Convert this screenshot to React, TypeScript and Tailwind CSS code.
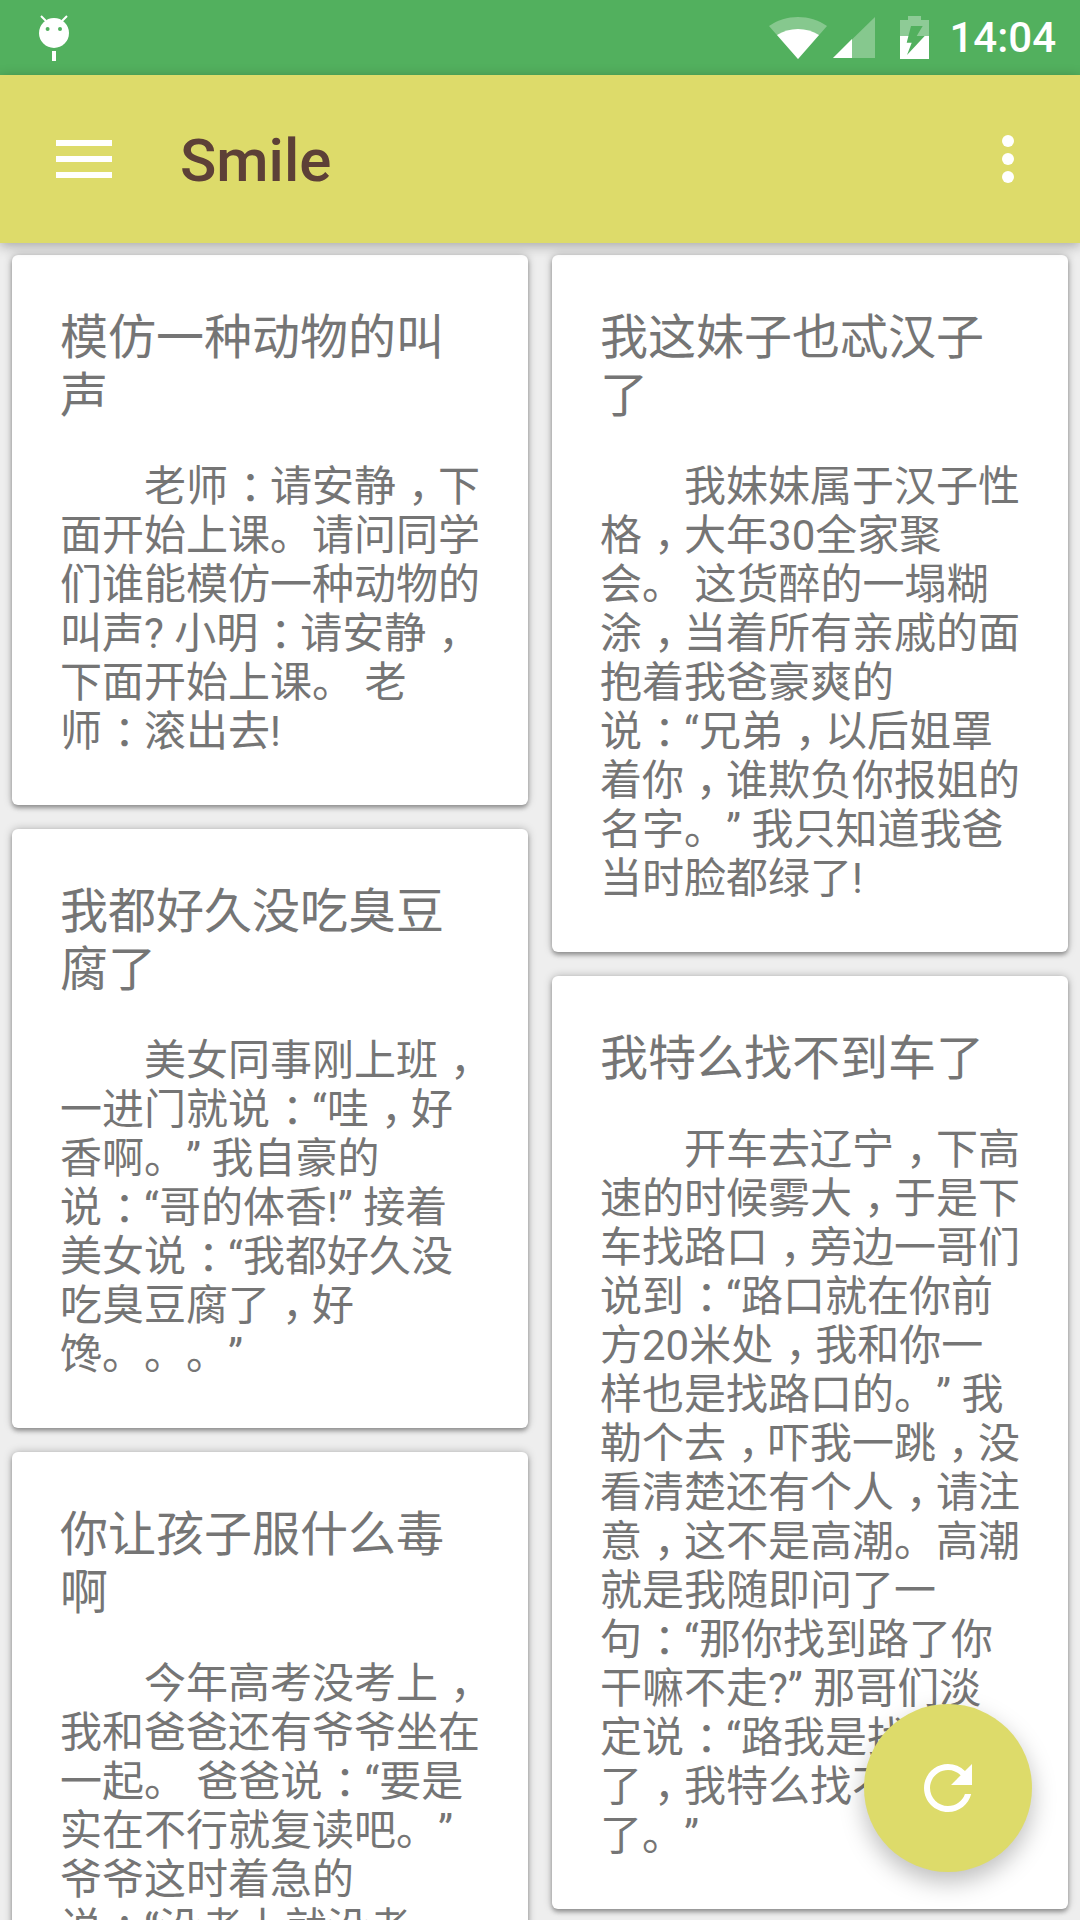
const font = { fontFamily: 'Roboto, "Noto Sans CJK SC", sans-serif' };

interface Joke {
  title: string[];
  body: string[];
}

const leftJokes: Joke[] = [
  {
    title: ['模仿一种动物的叫', '声'],
    body: ['老师：请安静，下', '面开始上课。请问同学', '们谁能模仿一种动物的', '叫声? 小明：请安静，', '下面开始上课。 老', '师：滚出去!'],
  },
  {
    title: ['我都好久没吃臭豆', '腐了'],
    body: ['美女同事刚上班，', '一进门就说：“哇，好', '香啊。” 我自豪的', '说：“哥的体香!” 接着', '美女说：“我都好久没', '吃臭豆腐了，好', '馋。。。”'],
  },
  {
    title: ['你让孩子服什么毒', '啊'],
    body: ['今年高考没考上，', '我和爸爸还有爷爷坐在', '一起。 爸爸说：“要是', '实在不行就复读吧。”', '爷爷这时着急的', '说：“没考上就没考'],
  },
];

const rightJokes: Joke[] = [
  {
    title: ['我这妹子也忒汉子', '了'],
    body: ['我妹妹属于汉子性', '格，大年30全家聚', '会。 这货醉的一塌糊', '涂，当着所有亲戚的面', '抱着我爸豪爽的', '说：“兄弟，以后姐罩', '着你，谁欺负你报姐的', '名字。” 我只知道我爸', '当时脸都绿了!'],
  },
  {
    title: ['我特么找不到车了'],
    body: ['开车去辽宁，下高', '速的时候雾大，于是下', '车找路口，旁边一哥们', '说到：“路口就在你前', '方20米处，我和你一', '样也是找路口的。” 我', '勒个去，吓我一跳，没', '看清楚还有个人，请注', '意，这不是高潮。高潮', '就是我随即问了一', '句：“那你找到路了你', '干嘛不走?” 那哥们淡', '定说：“路我是找到', '了，我特么找不到车', '了。”'],
  },
];

// the comma and colon sit in the middle of their cell in the screenshot
function BodyLine({ text }: { text: string }) {
  return (
    <>
      {text.split(/([，：])/).map((part, i) =>
        part === '，' || part === '：' ? (
          <span key={i} className="ml-[12px] tracking-[-12px]">
            {part}
          </span>
        ) : (
          <span key={i}>{part}</span>
        ),
      )}
    </>
  );
}

function JokeCard({ joke }: { joke: Joke }) {
  return (
    <div className="bg-white rounded-[6px] px-12 pt-[54px] pb-[49px] shadow-[0_3px_4px_rgba(0,0,0,0.3),0_0_8px_rgba(0,0,0,0.25)]">
      <div className="text-[48px] leading-[58px] text-[#757575] whitespace-nowrap">
        {joke.title.map((line) => (
          <div key={line}>{line}</div>
        ))}
      </div>
      <div className="mt-[37px] text-[42px] leading-[49px] text-[#757575] whitespace-nowrap [text-spacing-trim:space-all]">
        {joke.body.map((line, i) => (
          <div key={line} className={i === 0 ? 'pl-[84px]' : ''}>
            <BodyLine text={line} />
          </div>
        ))}
      </div>
    </div>
  );
}

export default function App() {
  return (
    <div className="relative w-[1080px] h-[1920px] overflow-hidden bg-[#eeeeee]" style={font}>
      {/* Status bar */}
      <div className="h-[75px] bg-[#52b05e] flex items-center justify-between pl-[39px] pr-[24px]">
        <svg width="30" height="46" viewBox="0 0 30 46">
          <circle cx="15" cy="18" r="15" fill="#fff" />
          <path d="M2 1 L7 6 M28 1 L23 6" stroke="#fff" strokeWidth="2" />
          <circle cx="8.6" cy="14" r="2" fill="#52b05e" />
          <circle cx="21" cy="14" r="2" fill="#52b05e" />
          <rect x="13" y="36" width="4" height="10" fill="#fff" />
        </svg>
        <div className="flex items-center">
          <svg width="58" height="42" viewBox="0 0 58 42">
            <path d="M0 9 C17 -3 41 -3 58 9 L29 42 Z" fill="#fff" fillOpacity="0.3" />
            <path d="M8 18 C20 10 38 10 50 18 L29 42 Z" fill="#fff" />
          </svg>
          <svg width="42" height="41" viewBox="0 0 42 41" className="ml-[6px]">
            <path d="M0 41 L42 0 V41 Z" fill="#fff" fillOpacity="0.3" />
            <path d="M0 41 L19 22 V41 Z" fill="#fff" />
          </svg>
          <svg width="29" height="43" viewBox="0 0 29 43" className="ml-[25px]">
            <path d="M8 0 H21 V4 H29 V43 H0 V4 H8 Z" fill="#fff" fillOpacity="0.35" />
            <path d="M0 20 H29 V43 H0 Z" fill="#fff" />
            <path d="M11 10 H22.7 L16.7 20 H24.7 L7 39 L11.7 26.7 H6.7 Z" fill="#52b05e" />
          </svg>
          <span className="ml-[20px] text-[42px] leading-none font-medium text-white">14:04</span>
        </div>
      </div>

      {/* App bar */}
      <div className="relative z-10 h-[168px] bg-[#dddb6a] flex items-center justify-between pl-[56px] pr-[60px] shadow-[0_3px_12px_rgba(0,0,0,0.3)]">
        <div className="flex items-center">
          <div className="w-[56px] flex flex-col gap-[10px]">
            <div className="h-[6px] bg-white" />
            <div className="h-[6px] bg-white" />
            <div className="h-[6px] bg-white" />
          </div>
          <span className="ml-[68px] mt-[4px] text-[60px] leading-none font-medium text-[#5d4037]">Smile</span>
        </div>
        <div className="flex flex-col gap-[6px] w-[24px] items-center">
          <div className="w-3 h-3 rounded-full bg-white" />
          <div className="w-3 h-3 rounded-full bg-white" />
          <div className="w-3 h-3 rounded-full bg-white" />
        </div>
      </div>

      {/* Cards */}
      <div className="flex gap-[24px] px-[12px] pt-[12px]">
        <div className="w-[516px] flex flex-col gap-[24px]">
          {leftJokes.map((j) => (
            <JokeCard key={j.title[0]} joke={j} />
          ))}
        </div>
        <div className="w-[516px] flex flex-col gap-[24px]">
          {rightJokes.map((j) => (
            <JokeCard key={j.title[0]} joke={j} />
          ))}
        </div>
      </div>

      {/* Refresh button */}
      <button className="absolute right-[48px] bottom-[48px] w-[168px] h-[168px] rounded-full bg-[#dddb6a] flex items-center justify-center shadow-[0_10px_24px_rgba(0,0,0,0.26)]">
        <svg width="72" height="72" viewBox="0 0 24 24" fill="#fff">
          <path d="M17.65 6.35A7.958 7.958 0 0 0 12 4c-4.42 0-7.99 3.58-7.99 8s3.57 8 7.99 8c3.73 0 6.84-2.55 7.73-6h-2.08A5.99 5.99 0 0 1 12 18c-3.31 0-6-2.69-6-6s2.69-6 6-6c1.66 0 3.14.69 4.22 1.78L13 11h7V4l-2.35 2.35z" />
        </svg>
      </button>
    </div>
  );
}
